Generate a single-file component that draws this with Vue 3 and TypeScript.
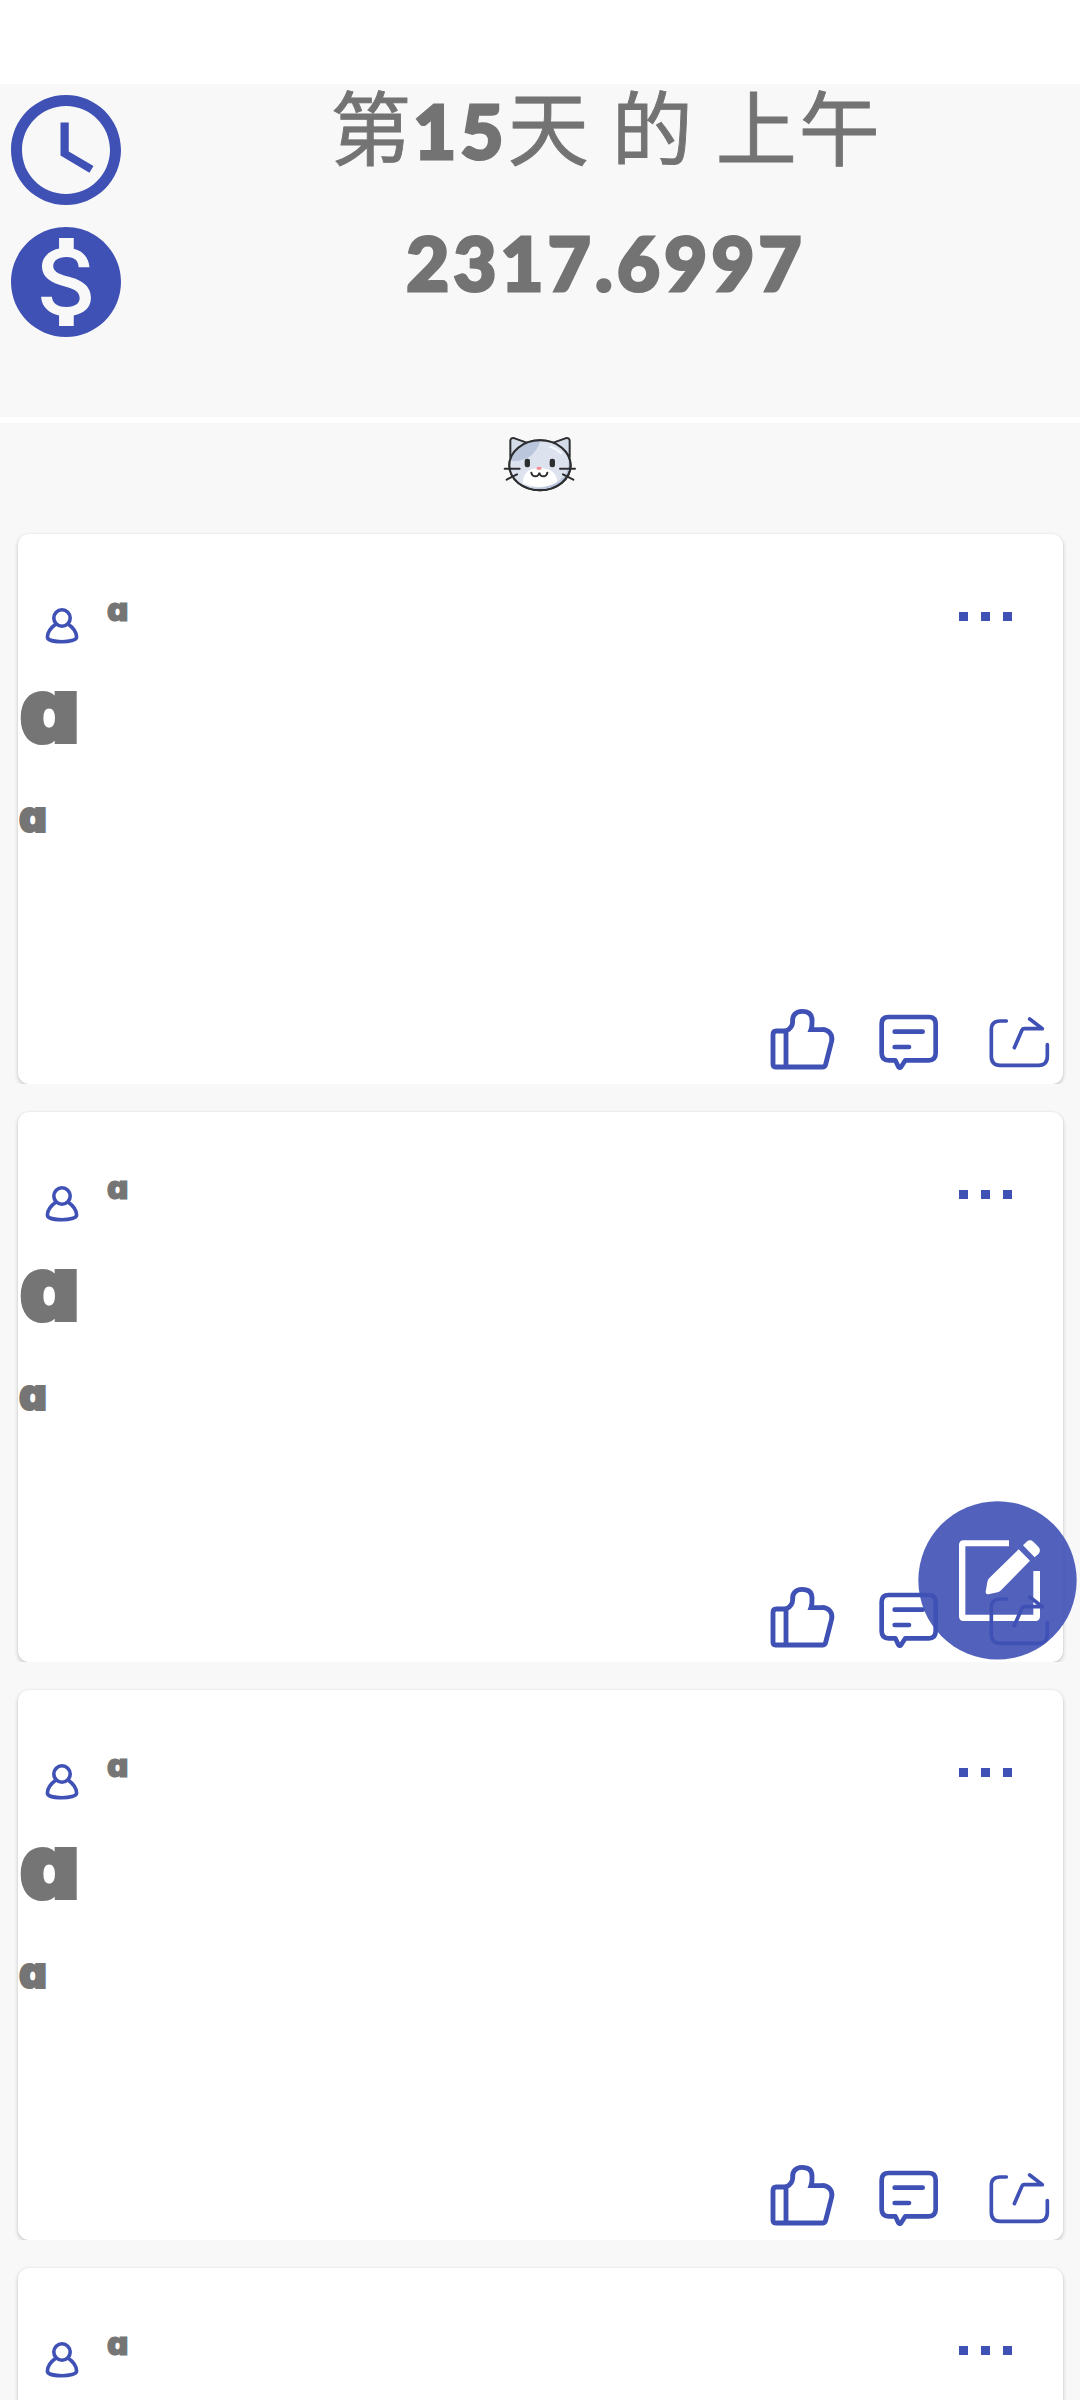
<script setup lang="ts">
interface Post {
  id: number
  author: string
  title?: string
  body?: string
}

const dayLine: string[] = ['第', '15', '天', ' ', '的', ' ', '上', '午']
const balance = '2317.6997'
const posts: Post[] = [
  { id: 1, author: 'a', title: 'a', body: 'a' },
  { id: 2, author: 'a', title: 'a', body: 'a' },
  { id: 3, author: 'a', title: 'a', body: 'a' },
  { id: 4, author: 'a' },
]

const kind = (part: string): string => (part === ' ' ? 'space' : /\d/.test(part) ? 'num' : 'han')
</script>

<template>
  <div class="screen">
    <div class="statusbar"></div>

    <header class="summary">
      <div class="row">
        <svg class="badge" viewBox="0 0 24 24">
          <path fill="currentColor" d="M11.99 2C6.47 2 2 6.48 2 12s4.47 10 9.99 10C17.52 22 22 17.52 22 12S17.52 2 11.99 2zM12 20c-4.42 0-8-3.58-8-8s3.58-8 8-8 8 3.58 8 8-3.58 8-8 8z" />
          <path fill="currentColor" d="M12.5 7H11v6l5.25 3.15.75-1.23-4.5-2.67z" />
        </svg>
        <div class="line"><span v-for="(part, i) in dayLine" :key="i" :class="kind(part)">{{ part }}</span></div>
      </div>
      <div class="row">
        <svg class="badge" viewBox="0 0 24 24">
          <path fill="currentColor" fill-rule="evenodd" d="M12 2C6.48 2 2 6.48 2 12s4.48 10 10 10 10-4.48 10-10S17.52 2 12 2zM13.41 18.09V20h-2.67v-1.93c-1.71-.36-3.16-1.46-3.27-3.4h1.96c.1 1.05.82 1.87 2.65 1.87 1.96 0 2.4-.98 2.4-1.59 0-.83-.44-1.61-2.67-2.14-2.48-.6-4.18-1.62-4.18-3.67 0-1.72 1.39-2.84 3.11-3.21V4h2.67v1.95c1.86.45 2.79 1.86 2.85 3.39H14.3c-.05-1.11-.64-1.87-2.22-1.87-1.5 0-2.4.68-2.4 1.64 0 .84.65 1.39 2.67 1.91s4.18 1.39 4.18 3.91c-.01 1.83-1.38 2.83-3.12 3.16z" />
        </svg>
        <div class="line"><span class="num">{{ balance }}</span></div>
      </div>
    </header>

    <main class="feed">
      <div class="mascot">
        <svg width="76" height="58" viewBox="66 105 228 174">
          <defs>
            <clipPath id="face"><ellipse cx="180" cy="196" rx="92" ry="75" /></clipPath>
          </defs>
          <g stroke="#2d2e30" stroke-width="6" stroke-linejoin="round" stroke-linecap="round">
            <path fill="#d3dbe9" d="M91 172V122Q92 112 104 115L140 128ZM269 172V122Q268 112 256 115L220 128Z" />
            <ellipse cx="180" cy="196" rx="92" ry="75" fill="#b9c6dc" />
          </g>
          <g clip-path="url(#face)">
            <ellipse cx="172" cy="190" rx="94" ry="73" fill="#dde3ee" />
            <path fill="#b9c6dc" d="M80 180Q160 196 184 115H80Z" />
            <path fill="#fff" d="M128 250Q130 204 178 204Q228 204 232 246Q180 274 128 250Z" />
            <path d="M212 141Q233 148 243 160" fill="none" stroke="#f5f8fd" stroke-width="7" stroke-linecap="round" />
          </g>
          <ellipse cx="180" cy="196" rx="92" ry="75" fill="none" stroke="#2d2e30" stroke-width="6" />
          <rect x="134" y="176" width="16" height="26" rx="7" fill="#2d2e30" />
          <rect x="209" y="176" width="16" height="26" rx="7" fill="#2d2e30" />
          <ellipse cx="177" cy="205" rx="8" ry="5" fill="#f58c94" />
          <path d="M154 218Q156 229 166 229Q176 229 178 218Q180 229 190 229Q200 229 202 218M74 206H119M80 239L111 223M240 206H285M249 223L280 239" fill="none" stroke="#2d2e30" stroke-width="6" stroke-linecap="round" />
        </svg>
      </div>

      <article v-for="post in posts" :key="post.id" class="card">
        <div class="head">
          <svg class="avatar" width="36" height="39" viewBox="0 0 36 39" fill="none" stroke="currentColor" stroke-width="3.6">
            <circle cx="18" cy="12" r="8.2" />
            <path d="M12 18Q3.5 24 3.4 31C3.4 37.4 32.6 37.4 32.6 31Q32.5 24 24 18" />
          </svg>
          <span class="author">{{ post.author }}</span>
          <div class="more"><i></i><i></i><i></i></div>
        </div>
        <div v-if="post.title" class="title">{{ post.title }}</div>
        <div v-if="post.body" class="body">{{ post.body }}</div>
        <div class="actions">
          <svg class="like" width="68" height="66" viewBox="84 78 204 198" fill="none" stroke="currentColor" stroke-width="14.5" stroke-linejoin="round">
            <path d="M139 153H109Q99 153 99 164V253Q99 261 106 261H247Q255 261 257 253L275 183C279 166 267 148 246 148" />
            <path stroke-linejoin="miter" d="M138 261V153Q158 143 158 125C156 108 166 94 186 94C209 94 216 105 216 120Q217 138 213 149H248" />
          </svg>
          <svg class="comment" width="63" height="60" viewBox="411 96 189 180" fill="none" stroke="currentColor" stroke-width="14" stroke-linejoin="round" stroke-linecap="round">
            <path d="M446 111H566Q587 111 587 132V220Q587 241 566 241H496L483 261Q479 266 475 260L466 241H446Q425 241 425 220V132Q425 111 446 111Z" />
            <path d="M464 155H548M464 201H507" />
          </svg>
          <svg class="share" width="64" height="55" viewBox="741 105 192 165" fill="none" stroke="currentColor" stroke-width="11" stroke-linejoin="round" stroke-linecap="round">
            <path d="M799 123H780Q754 123 754 149V229Q754 256 780 256H896Q922 256 922 229V194" />
            <path d="M823 203L846 150Q848 146 853 146H907L869 117" />
          </svg>
        </div>
      </article>
    </main>

    <svg class="fab" width="160" height="160" viewBox="54 60 480 480">
      <mask id="compose">
        <rect x="53" y="60" width="482" height="482" fill="#fff" />
        <path fill="#000" d="M327 181V199H196V404H400V273H420V409Q420 423 406 423H191Q177 423 177 409V195Q177 181 191 181Z" />
        <path fill="#000" d="M356 208L390 242L303 331Q299 336 293 337L265 343Q256 344 257 335L262 306Q263 299 268 294Z" />
        <path fill="#000" d="M369 196L380 185Q390 177 400 185L415 200Q424 211 416 221L404 232Z" />
      </mask>
      <circle cx="292.5" cy="301" r="237.5" fill="#3f51b5" fill-opacity=".9" mask="url(#compose)" />
    </svg>
  </div>
</template>

<style>
body {
  margin: 0;
  background: #f8f8f8;
}
</style>

<style scoped>
.screen {
  position: relative;
  width: 1080px;
  height: 2400px;
  overflow: hidden;
  background: #f8f8f8;
  color: #737373;
  font-family: Inter, "Noto Sans CJK SC", sans-serif;
}
.screen svg {
  display: block;
  flex: none;
}
.statusbar {
  height: 84px;
  background: #fff;
}
.summary {
  height: 333px;
  border-bottom: 6px solid #fff;
}
.row {
  display: flex;
  height: 132px;
}
.badge {
  width: 132px;
  height: 132px;
  color: #3f51b5;
}
.line {
  display: flex;
  align-items: baseline;
  justify-content: center;
  width: 952px;
  line-height: 93px;
  white-space: pre;
}
.han {
  font: 400 81px/80px "Noto Sans CJK SC", sans-serif;
  letter-spacing: 2px;
  -webkit-text-stroke: 0.9px #737373;
}
.num {
  font-family: Lato, sans-serif;
  font-size: 74px;
  font-weight: 900;
  letter-spacing: 4.3px;
  -webkit-text-stroke: 3px #737373;
}
.space {
  width: 21px;
}
.mascot {
  display: flex;
  justify-content: center;
  height: 99px;
  padding-top: 12px;
}
.card {
  display: flex;
  flex-direction: column;
  box-sizing: border-box;
  width: 1045px;
  height: 550px;
  margin: 0 0 28px 18px;
  border-radius: 11px;
  background: #fff;
  box-shadow: 0 2px 4px rgba(0, 0, 0, 0.2), 0 0 2px rgba(0, 0, 0, 0.08);
  clip-path: inset(-6px -10px 0 -10px);
  color: #757575;
  font-feature-settings: "cv11";
  font-weight: 900;
}
.head {
  display: flex;
  align-items: flex-start;
  height: 140px;
  padding: 72px 0 0 26px;
  box-sizing: border-box;
}
.avatar {
  color: #3f51b5;
}
.author {
  margin-left: 27px;
  font-size: 33px;
  line-height: 7px;
  -webkit-text-stroke: 1.2px #757575;
}
.more {
  display: flex;
  gap: 13px;
  margin: 6px 51px 0 auto;
}
.more i {
  width: 9px;
  height: 9px;
  background: #3f51b5;
}
.title {
  height: 120px;
  padding-left: 2px;
  font-size: 89px;
  line-height: 72px;
  transform: scaleX(1.03);
  transform-origin: 0 0;
  -webkit-text-stroke: 4px #757575;
}
.body {
  padding-left: 1px;
  font-size: 43px;
  line-height: 45px;
  -webkit-text-stroke: 2px #757575;
}
.actions {
  display: flex;
  align-items: flex-start;
  justify-content: flex-end;
  height: 78px;
  margin: auto 12px 0 0;
  color: #3f51b5;
}
.comment {
  margin: 6px 47px 0 41px;
}
.share {
  margin-top: 9px;
}
.fab {
  position: absolute;
  top: 1500px;
  left: 918px;
}
</style>
